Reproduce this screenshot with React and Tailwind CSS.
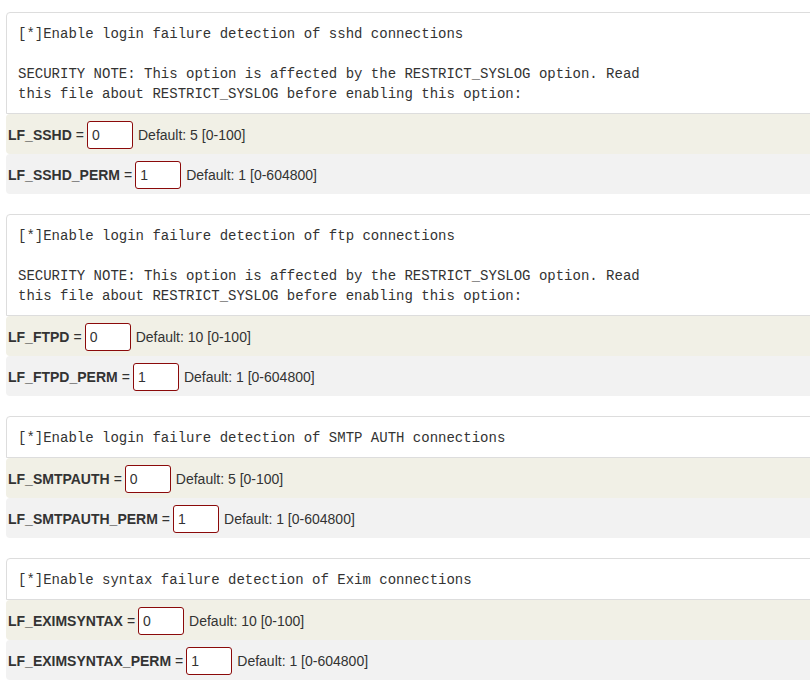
const groups = [
  {
    comment: [
      "[*]Enable login failure detection of sshd connections",
      "",
      "SECURITY NOTE: This option is affected by the RESTRICT_SYSLOG option. Read",
      "this file about RESTRICT_SYSLOG before enabling this option:",
    ],
    rows: [
      { name: "LF_SSHD", value: "0", def: "Default: 5 [0-100]" },
      { name: "LF_SSHD_PERM", value: "1", def: "Default: 1 [0-604800]" },
    ],
  },
  {
    comment: [
      "[*]Enable login failure detection of ftp connections",
      "",
      "SECURITY NOTE: This option is affected by the RESTRICT_SYSLOG option. Read",
      "this file about RESTRICT_SYSLOG before enabling this option:",
    ],
    rows: [
      { name: "LF_FTPD", value: "0", def: "Default: 10 [0-100]" },
      { name: "LF_FTPD_PERM", value: "1", def: "Default: 1 [0-604800]" },
    ],
  },
  {
    comment: ["[*]Enable login failure detection of SMTP AUTH connections"],
    rows: [
      { name: "LF_SMTPAUTH", value: "0", def: "Default: 5 [0-100]" },
      { name: "LF_SMTPAUTH_PERM", value: "1", def: "Default: 1 [0-604800]" },
    ],
  },
  {
    comment: ["[*]Enable syntax failure detection of Exim connections"],
    rows: [
      { name: "LF_EXIMSYNTAX", value: "0", def: "Default: 10 [0-100]" },
      { name: "LF_EXIMSYNTAX_PERM", value: "1", def: "Default: 1 [0-604800]" },
    ],
  },
]

const Row = ({ row, odd }) => {
  return (
    <div
      className={
        odd
          ? "h-[40px] flex items-center pl-[2px] pt-[2px] bg-[#f2f2f2] rounded-[4px]"
          : "h-[40px] flex items-center pl-[2px] pt-[2px] bg-[#f1f0e6] rounded-[4px]"
      }
    >
      <b className="font-bold">{row.name}</b>
      <span className="ml-[4px] mr-[3px]">=</span>
      <input
        readOnly
        value={row.value}
        className="w-[46px] h-[28px] border border-[#8b0a0a] rounded-[3px] bg-white px-[4px] text-[14px] text-[#333] outline-none"
      />
      <span className="ml-[5px]">{row.def}</span>
    </div>
  )
}

const App = () => {
  return (
    <div className="w-[810px] h-[693px] overflow-hidden bg-white text-[#333] text-[14px] font-['Liberation_Sans',Arial,sans-serif]">
      <div className="w-[830px] ml-[6px] pt-[12px] flex flex-col gap-[20px]">
        {groups.map((g, i) => (
          <div key={i}>
            <pre className="border border-[#dddddd] rounded-t-[4px] bg-white px-[11px] pt-[11px] pb-[9px] leading-[20px] text-[14px] text-[#333] font-['Liberation_Mono','Courier_New',monospace] whitespace-pre">
              {g.comment.join("\n")}
            </pre>
            {g.rows.map((r, j) => (
              <Row key={j} row={r} odd={j === 1} />
            ))}
          </div>
        ))}
      </div>
    </div>
  )
}

export default App
